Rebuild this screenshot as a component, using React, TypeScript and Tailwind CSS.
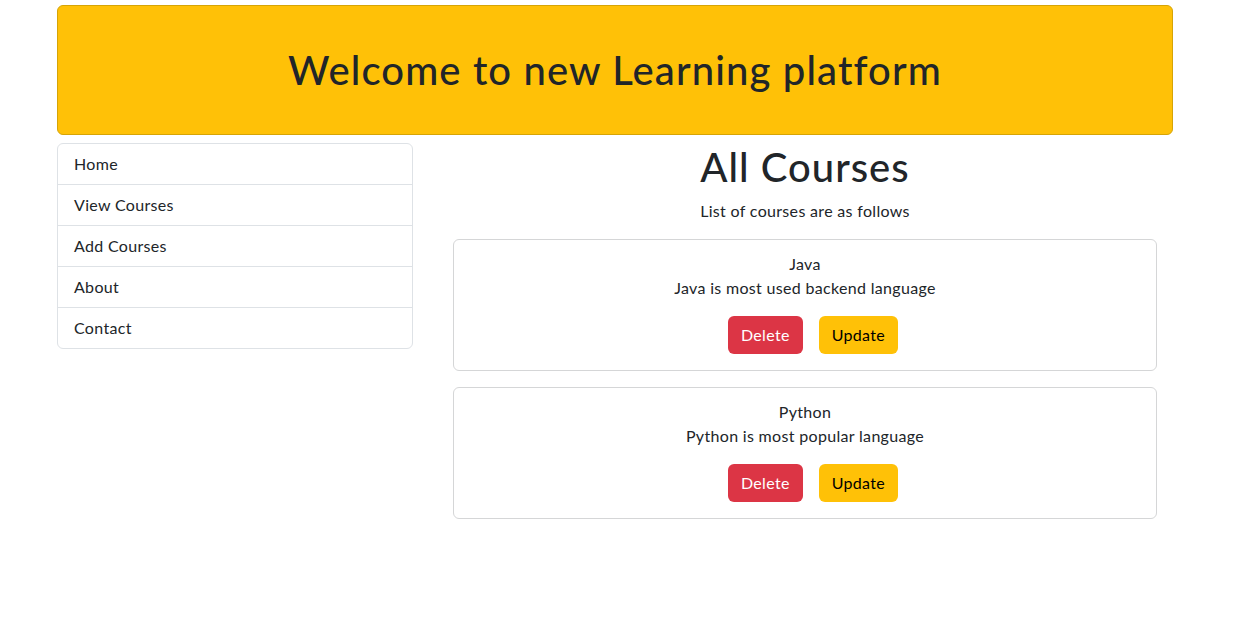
const courses = [
  { title: 'Java', description: 'Java is most used backend language' },
  { title: 'Python', description: 'Python is most popular language' },
]

const menu = ['Home', 'View Courses', 'Add Courses', 'About', 'Contact']

function CourseCard({ title, description }: { title: string; description: string }) {
  return (
    <div className="rounded-md border border-[#d5d6d7] bg-white px-4 pt-3 pb-4 text-center">
      <div className="leading-6">{title}</div>
      <div className="leading-6">{description}</div>
      <div className="mt-4 flex justify-center">
        <button className="ml-4 h-[38px] rounded-md bg-[#dc3545] px-[13px] text-white">Delete</button>
        <button className="ml-4 h-[38px] rounded-md bg-[#ffc107] px-[13px] text-black">Update</button>
      </div>
    </div>
  )
}

export default function App() {
  return (
    <div
      className="min-h-[617px] bg-white text-base tracking-[0.02em] text-[#212529]"
      style={{ fontFamily: 'Lato, "Noto Sans", sans-serif' }}
    >
      <div className="ml-[57px] w-[1116px] pt-[5px]">
        {/* Header */}
        <div className="flex h-[130px] items-center justify-center rounded-md border border-[#d6a406] bg-[#ffc107]">
          <h1 className="text-[40px] leading-[48px] font-medium tracking-[0.028em]">
            Welcome to new Learning platform
          </h1>
        </div>

        <div className="mt-2 flex gap-6">
          {/* Sidebar */}
          <div className="w-[356px] shrink-0">
            <div className="overflow-hidden rounded-md border border-[#dee2e6]">
              {menu.map((item, i) => (
                <div
                  key={item}
                  className={`px-4 py-2 leading-6 ${i > 0 ? 'border-t border-[#dee2e6]' : ''}`}
                >
                  {item}
                </div>
              ))}
            </div>
          </div>

          {/* Courses */}
          <div className="flex-1 px-4">
            <h1 className="text-center text-[40px] leading-[48px] font-medium tracking-[0.025em]">
              All Courses
            </h1>
            <p className="mt-2 mb-4 text-center leading-6">List of courses are as follows</p>
            <div className="flex flex-col gap-4">
              {courses.map((c) => (
                <CourseCard key={c.title} title={c.title} description={c.description} />
              ))}
            </div>
          </div>
        </div>
      </div>
    </div>
  )
}
